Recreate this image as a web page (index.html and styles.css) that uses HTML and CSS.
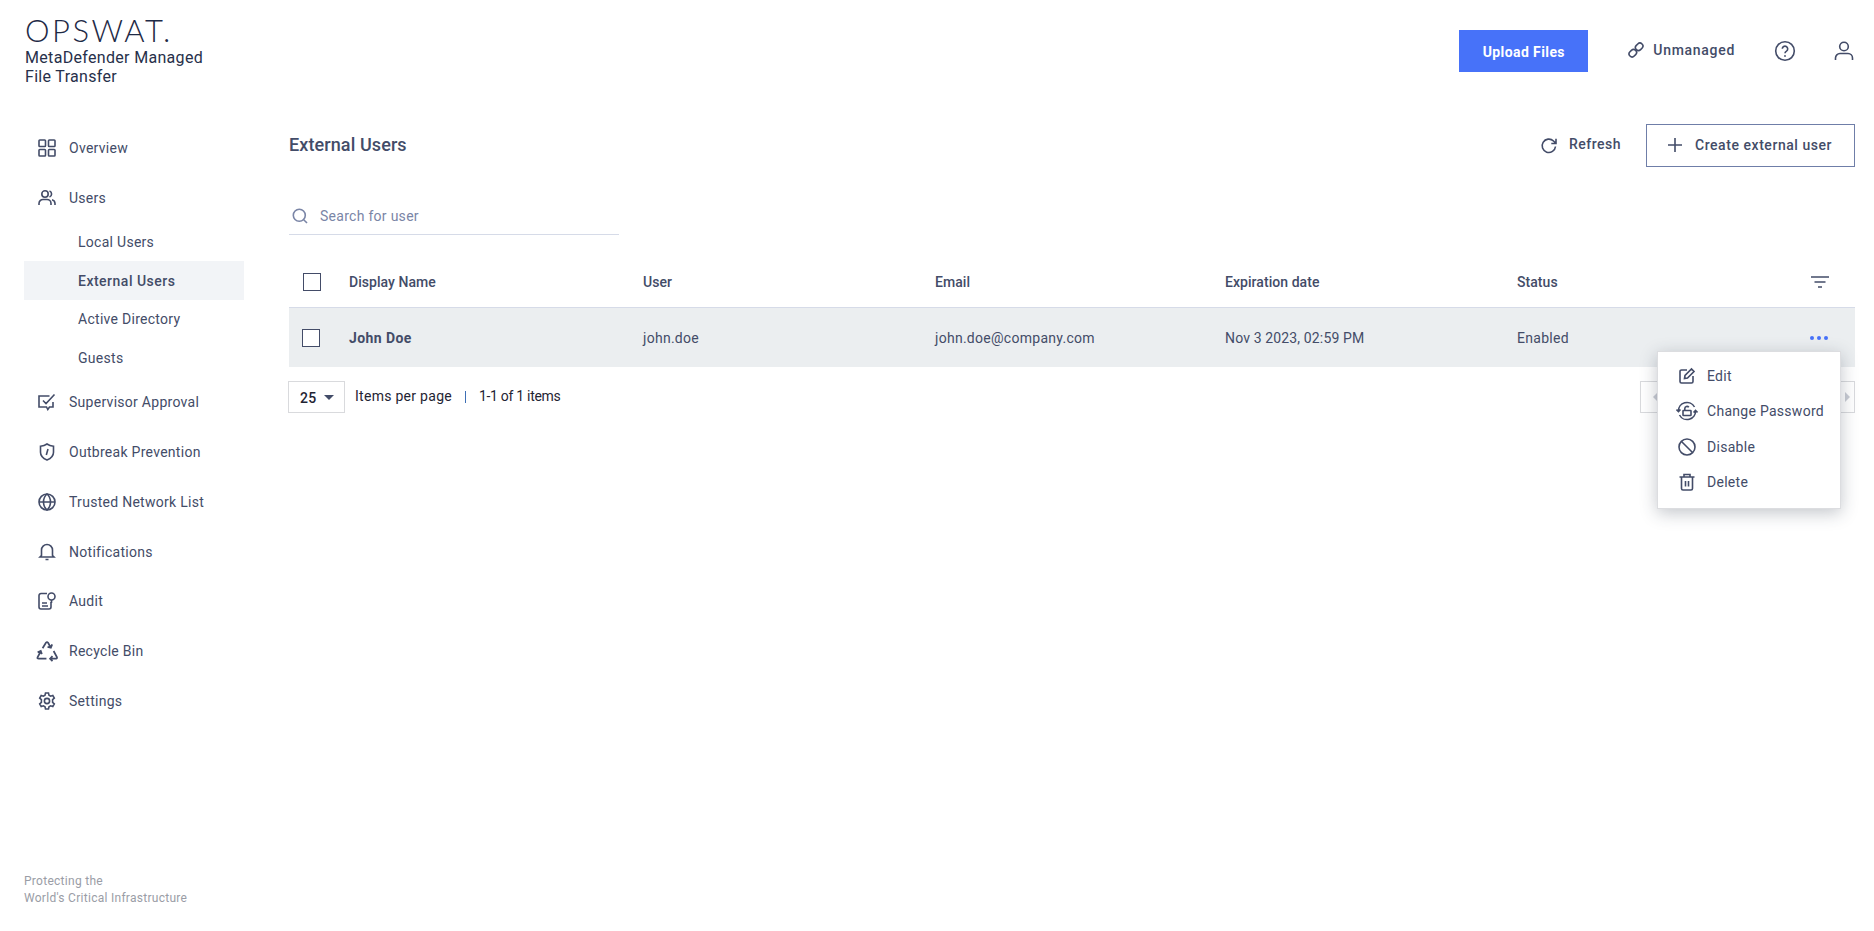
FILE: index.html
```html
<!DOCTYPE html>
<html lang="en">
<head>
<meta charset="utf-8">
<title>External Users</title>
<link rel="stylesheet" href="styles.css">
</head>
<body>
<header class="topbar">
  <div class="brand">
    <div class="logo">OPSWAT.</div>
    <div class="product">MetaDefender Managed<br>File Transfer</div>
  </div>
  <div class="top-actions">
    <button class="upload">Upload Files</button>
    <div class="unmanaged">
      <svg class="ic18" viewBox="0 0 18 18"><g transform="rotate(-45 9 9)"><rect x="0.500" y="6" width="8" height="6" rx="3"/><rect x="9.500" y="6" width="8" height="6" rx="3"/></g></svg>
      <span>Unmanaged</span>
    </div>
    <svg class="help" viewBox="0 0 22 22"><circle cx="11" cy="11" r="9.300"/><path d="M8.300 8.800a2.700 2.700 0 1 1 4.200 2.300c-1 .6-1.500 1.100-1.500 2.200"/><circle class="dot" cx="11" cy="16" r=".9"/></svg>
    <svg class="user" viewBox="0 0 22 22"><circle cx="11" cy="6.500" r="4.300"/><path d="M2.500 20v-2a4.500 4.500 0 0 1 4.500-4.500h8a4.500 4.500 0 0 1 4.500 4.500v2"/></svg>
  </div>
</header>
<div class="layout">
  <aside class="sidebar">
    <nav class="nav">
      <a class="item"><svg class="ic" viewBox="0 0 18 18"><rect x="1" y="1" width="6.500" height="6.500" rx=".8"/><rect x="10.500" y="1" width="6.500" height="6.500" rx=".8"/><rect x="1" y="10.500" width="6.500" height="6.500" rx=".8"/><rect x="10.500" y="10.500" width="6.500" height="6.500" rx=".8"/></svg>Overview</a>
      <a class="item"><svg class="ic" viewBox="0 0 18 18"><circle cx="7" cy="5" r="3.200"/><path d="M1 16v-1.500A4 4 0 0 1 5 10.500h4a4 4 0 0 1 4 4V16M11.500 2a3.200 3.200 0 0 1 0 6M14 10.700a4 4 0 0 1 3 3.800V16"/></svg>Users</a>
      <a class="sub">Local Users</a>
      <a class="sub active">External Users</a>
      <a class="sub">Active Directory</a>
      <a class="sub">Guests</a>
      <a class="item"><svg class="ic" viewBox="0 0 18 18"><path d="M15 9v5H11.500L9.800 16.500 8.500 14H1V3h10.500M5 7.500l3 3L16.500 1.500"/></svg>Supervisor Approval</a>
      <a class="item"><svg class="ic" viewBox="0 0 18 18"><path d="M9 1c2 1.400 4.300 2 6.500 2.200v6c0 3.500-2.700 6.300-6.500 7.800-3.800-1.500-6.500-4.300-6.500-7.800v-6C4.700 3 7 2.400 9 1zM10 6 8.300 12"/></svg>Outbreak Prevention</a>
      <a class="item"><svg class="ic" viewBox="0 0 18 18"><circle cx="9" cy="9" r="8"/><path d="M1 9h16M9 1c2.500 2.200 3.500 5 3.500 8s-1 5.800-3.500 8c-2.500-2.200-3.500-5-3.500-8S6.500 3.200 9 1z"/></svg>Trusted Network List</a>
      <a class="item"><svg class="ic" viewBox="0 0 18 18"><path d="M3.500 12.500V7a5.500 5.500 0 0 1 11 0v5.500l1.500 1.500H2zM7.500 16.500h3"/></svg>Notifications</a>
      <a class="item"><svg class="ic" viewBox="0 0 18 18"><path d="M9 1.500H3a2 2 0 0 0-2 2V15a2 2 0 0 0 2 2h8a2 2 0 0 0 2-2V10M4 11h5M4 14h6"/><circle cx="13.500" cy="4.500" r="3.500"/><path d="M13.500 8v3"/></svg>Audit</a>
      <a class="item"><svg class="ic ic-wide" viewBox="0 0 20 20"><path d="M6 7.500 9 2.500Q10 1.300 11 2.500L13.500 7M14.700 4 13.500 7 10.500 6.200M16 10l3 5.500Q19.500 17 17.500 17H13M15 14.700 12.800 17 15 19.200M9.500 17H2.500Q.8 17 1.500 15.500L4.300 10.500M1.500 11.200 4.300 10 5.300 12.800"/></svg>Recycle Bin</a>
      <a class="item"><svg class="ic" viewBox="0 0 18 18"><circle cx="9" cy="9" r="2.600"/><path d="M7.500 1h3l.5 2.300 1.600.9 2.200-.7 1.500 2.600-1.700 1.600v2.600l1.700 1.600-1.500 2.600-2.200-.7-1.600.9-.5 2.300h-3L7 14.700l-1.600-.9-2.200.7-1.500-2.600 1.700-1.600V7.700L1.700 6.100 3.200 3.500l2.200.7L7 3.300z"/></svg>Settings</a>
    </nav>
    <div class="tagline">Protecting the<br>World's Critical Infrastructure</div>
  </aside>
  <main class="content">
    <div class="title-row">
      <h1>External Users</h1>
      <div class="title-actions">
        <div class="refresh">
          <svg class="ic" viewBox="0 0 18 18"><path d="M15.500 9.500A6.700 6.700 0 1 1 13.500 4L16 6.500M16 1.800v4.700h-4.700" /></svg>
          <span>Refresh</span>
        </div>
        <button class="create">
          <svg class="plus" viewBox="0 0 14 14"><path d="M7 0v14M0 7h14"/></svg>
          <span>Create external user</span>
        </button>
      </div>
    </div>
    <div class="search">
      <svg class="search-ic" viewBox="0 0 16 16"><circle cx="7.300" cy="7.300" r="6"/><path d="m11.700 11.700 3.300 3.300"/></svg>
      <span>Search for user</span>
    </div>
    <table class="users">
      <thead>
        <tr>
          <th class="c-check"><span class="box"></span></th>
          <th class="c-name">Display Name</th>
          <th class="c-user">User</th>
          <th class="c-email">Email</th>
          <th class="c-date">Expiration date</th>
          <th>Status</th>
          <th class="c-end"><svg class="filter" viewBox="0 0 18 12"><path d="M0 1h18M3.500 6h11M7 11h4"/></svg></th>
        </tr>
      </thead>
      <tbody>
        <tr>
          <td class="c-check"><span class="box box-row"></span></td>
          <td class="name"><span class="cell">John Doe</span></td>
          <td><span class="cell">john.doe</span></td>
          <td><span class="cell">john.doe@company.com</span></td>
          <td><span class="cell date">Nov 3 2023, 02:59 PM</span></td>
          <td><span class="cell">Enabled</span></td>
          <td class="c-end"><span class="dots"><i></i><i></i><i></i></span></td>
        </tr>
      </tbody>
    </table>
    <div class="pagination">
      <div class="per-page"><span class="pp-num">25</span><span class="caret"></span></div>
      <span class="pp-label">Items per page</span>
      <span class="pp-sep"></span>
      <span class="pp-label pp-count">1-1 of 1 items</span>
      <div class="pager"><span class="arrow left"></span><span class="arrow right"></span></div>
    </div>
    <div class="menu">
      <div class="menu-item"><svg class="mi" viewBox="0 0 18 18"><path d="M9 3H3.500A1.500 1.500 0 0 0 2 4.500v10A1.500 1.500 0 0 0 3.500 16h10a1.500 1.500 0 0 0 1.500-1.500V9M6.500 11.500l.5-3L13.500 2l2.500 2.500L9.500 11z"/></svg>Edit</div>
      <div class="menu-item"><svg class="mi mi-wide" viewBox="0 0 22 20"><path d="M2.500 10.500A8.500 8.500 0 0 1 18.500 6M19.500 9.500A8.500 8.500 0 0 1 3.500 14M.5 8.500l2 2 2-2M17.500 11.500l2-2 2 2"/><rect x="7" y="9.500" width="8" height="5" rx=".5"/><path d="M8.800 9.500V7.500a2.200 2.200 0 0 1 4-1.200"/></svg>Change Password</div>
      <div class="menu-item"><svg class="mi" viewBox="0 0 18 18"><circle cx="9" cy="9" r="8"/><path d="m3.500 3.500 11 11"/></svg>Disable</div>
      <div class="menu-item"><svg class="mi" viewBox="0 0 18 18"><path d="M1.500 4h15M6 4V1.500h6V4M3.500 4v11.500A1.500 1.500 0 0 0 5 17h8a1.500 1.500 0 0 0 1.500-1.500V4M7.500 8v5.500M10.500 8v5.500"/></svg>Delete</div>
    </div>
  </main>
</div>
</body>
</html>
```

FILE: styles.css
```css
* { box-sizing: border-box; }
html, body { margin: 0; height: 931px; overflow: hidden; background: #fff; }
body { font-family: Roboto, "Liberation Sans", sans-serif; font-size: 14px; letter-spacing: .28px; color: #434c68; }
svg { fill: none; stroke: #434c68; stroke-width: 1.6; flex: none; display: block; }

.topbar { height: 100px; display: flex; justify-content: space-between; align-items: flex-start; }
.brand { padding: 15px 0 0 25px; }
.logo { font-family: Lato, sans-serif; font-weight: 300; font-size: 31px; line-height: 31px; letter-spacing: 2.500px; color: #1e2a46; height: 31px; }
.product { font-size: 16px; line-height: 19px; letter-spacing: .32px; color: #27304a; margin-top: 2px; }
.top-actions { display: flex; align-items: center; padding: 30px 0 0; height: 72px; }
.upload { width: 129px; height: 42px; background: #4772f9; color: #fff; border: 0; font: 700 14px Roboto, sans-serif; letter-spacing: .4px; padding: 2px 0 0; }
.unmanaged { display: flex; align-items: center; gap: 8px; margin-left: 39px; font-weight: 500; letter-spacing: .7px; margin-top: -3px; }
.ic18 { width: 18px; height: 18px; }
.help { width: 22px; height: 22px; margin-left: 39px; }
.help .dot { fill: #434c68; stroke: none; }
.user { width: 22px; height: 22px; margin-left: 37px; margin-right: 19px; }

.layout { display: flex; height: 831px; }
.sidebar { width: 289px; flex: none; padding: 23px 0 24px 24px; display: flex; flex-direction: column; }
.nav { width: 220px; display: flex; flex-direction: column; }
.item { height: 49.800px; display: flex; align-items: center; padding-left: 14px; gap: 13px; }
.ic { width: 18px; height: 18px; }
.ic-wide { width: 22px; height: 22px; margin: 0 -2px; }
.sub { height: 38.700px; display: flex; align-items: center; padding-left: 54px; }
.sub.active { background: #f2f4f7; font-weight: 500; letter-spacing: .5px; }
.tagline { margin-top: auto; font-size: 12px; line-height: 17px; color: #9a9da6; }

.content { flex: 1; padding: 24px 19px 0 0; position: relative; min-width: 0; }
.title-row { display: flex; justify-content: space-between; align-items: center; height: 43px; }
h1 { margin: -2px 0 0; font-size: 18px; font-weight: 500; letter-spacing: .1px; color: #434c68; }
.title-actions { display: flex; align-items: center; }
.refresh { display: flex; align-items: center; gap: 11px; font-weight: 500; letter-spacing: .5px; margin-right: 25px; }
.refresh span { margin-top: -3px; }
.create { width: 209px; height: 43px; border: 1px solid #6f7ea8; background: #fff; color: #434c68; font: 500 14px Roboto, sans-serif; letter-spacing: .55px; display: flex; align-items: center; gap: 13px; padding: 0 0 2px 21px; }
.plus { width: 14px; height: 14px; }

.search { width: 330px; height: 40px; margin-top: 28px; border-bottom: 1px solid #d6dbe8; display: flex; align-items: center; gap: 12px; padding: 2px 0 0 3px; color: #7a85a6; }
.search-ic { width: 16px; height: 16px; stroke: #7a85a6; }

.users { width: 100%; margin-top: 24px; border-collapse: collapse; table-layout: fixed; }
.users th { height: 48px; text-align: left; font-size: 14px; font-weight: 500; letter-spacing: .05px; border-bottom: 1px solid #d6dbe8; padding: 0 0 2px; }
.users td { height: 60px; padding: 1px 0 0; background: #ebeef0; }
.c-check { width: 60px; }
.c-name { width: 294px; }
.c-user { width: 292px; }
.c-email { width: 290px; }
.c-date { width: 292px; }
.c-end { width: 60px; }
.box { display: block; width: 18px; height: 18px; border: 1px solid #434c68; margin-left: 14px; background: #fff; }
.box-row { margin-left: 13px; }
.name { font-weight: 700; letter-spacing: .42px; }
.date { letter-spacing: .14px; }
.filter { width: 18px; height: 12px; margin-left: auto; margin-right: 26px; }
.dots { display: flex; gap: 3px; justify-content: flex-end; margin-right: 27px; }
.dots i { width: 4px; height: 4px; border-radius: 50%; background: #4772f9; }

.pagination { display: flex; align-items: center; margin: 14px 0 0 -1px; height: 32px; color: #1f2433; }
.per-page { width: 57px; height: 32px; border: 1px solid #d9dadd; display: flex; align-items: center; padding-left: 11px; gap: 8px; font-weight: 500; }
.pp-num { margin-top: 2px; }
.caret { border: 5px solid transparent; border-top-color: #434c68; border-bottom: 0; }
.pp-label { margin-top: -2px; }
.per-page + .pp-label { margin-left: 10px; }
.pp-count { letter-spacing: -.3px; }
.pp-sep { width: 1px; height: 12px; background: #3d6fb5; margin: 0 13px; }
.pager { margin-left: auto; width: 215px; height: 32px; border: 1px solid #d9dadd; display: flex; justify-content: space-between; align-items: center; padding: 0 4px 0 12px; }
.arrow { border: 5px solid transparent; }
.arrow.left { border-right-color: #c9ccd4; border-left: 0; }
.arrow.right { border-left-color: #c9ccd4; border-right: 0; }

.menu { position: absolute; left: 1368px; top: 251px; width: 184px; height: 158px; background: #fff; border: 1px solid #dcdde0; box-shadow: 0 4px 16px rgba(40, 50, 70, .28); padding: 6px 0; }
.menu-item { height: 35.500px; display: flex; align-items: center; gap: 11px; padding-left: 20px; }
.mi { width: 18px; height: 18px; }
.mi-wide { width: 22px; height: 20px; margin: 0 -2px; }
```
